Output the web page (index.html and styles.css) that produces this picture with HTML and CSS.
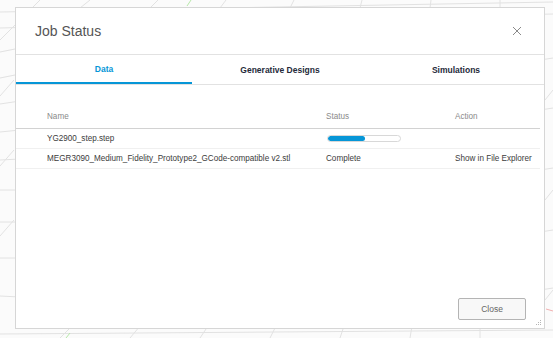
FILE: index.html
```html
<!DOCTYPE html>
<html lang="en">
<head>
    <meta charset="UTF-8">
    <meta name="viewport" content="width=device-width, initial-scale=1.0">
    <title>Job Status</title>
    <link rel="stylesheet" href="styles.css">
</head>

<body>
    <!-- viewport grid behind the dialog -->
    <svg class="grid" width="553" height="338" viewBox="0 0 553 338">
        <g stroke="#e2e2e2" stroke-width="1" fill="none">
            <line x1="0" y1="12" x2="553" y2="2"/>
            <line x1="0" y1="28" x2="553" y2="14"/>
            <line x1="0" y1="52" x2="30" y2="46"/>
            <line x1="0" y1="78" x2="20" y2="74"/>
            <line x1="0" y1="104" x2="20" y2="101"/>
            <line x1="0" y1="132" x2="20" y2="130"/>
            <line x1="0" y1="160" x2="20" y2="159"/>
            <line x1="0" y1="190" x2="20" y2="190"/>
            <line x1="0" y1="222" x2="20" y2="222"/>
            <line x1="0" y1="258" x2="20" y2="258"/>
            <line x1="0" y1="296" x2="20" y2="297"/>
            <line x1="0" y1="334" x2="553" y2="330"/>
            <line x1="540" y1="60" x2="553" y2="58"/>
            <line x1="540" y1="110" x2="553" y2="108"/>
            <line x1="540" y1="170" x2="553" y2="168"/>
            <line x1="540" y1="232" x2="553" y2="230"/>
            <line x1="540" y1="290" x2="553" y2="288"/>
            <line x1="40" y1="0" x2="0" y2="40"/>
            <line x1="14" y1="80" x2="0" y2="96"/>
            <line x1="14" y1="150" x2="0" y2="166"/>
            <line x1="14" y1="220" x2="0" y2="236"/>
            <line x1="60" y1="338" x2="72" y2="326"/>
            <line x1="130" y1="338" x2="140" y2="326"/>
            <line x1="200" y1="338" x2="208" y2="326"/>
            <line x1="270" y1="338" x2="276" y2="326"/>
            <line x1="340" y1="338" x2="344" y2="326"/>
            <line x1="410" y1="338" x2="412" y2="326"/>
            <line x1="480" y1="338" x2="480" y2="326"/>
            <line x1="80" y1="8" x2="90" y2="0"/>
            <line x1="150" y1="8" x2="158" y2="0"/>
            <line x1="220" y1="8" x2="226" y2="0"/>
            <line x1="290" y1="8" x2="294" y2="0"/>
            <line x1="360" y1="8" x2="362" y2="0"/>
            <line x1="430" y1="8" x2="431" y2="0"/>
            <line x1="500" y1="8" x2="500" y2="0"/>
            <line x1="553" y1="90" x2="545" y2="100"/>
            <line x1="553" y1="190" x2="545" y2="200"/>
            <line x1="553" y1="290" x2="545" y2="300"/>
        </g>
        <line x1="187" y1="6" x2="191" y2="0" stroke="#b6e8a8"/>
        <line x1="66" y1="338" x2="70" y2="333" stroke="#b6e8a8"/>
        <line x1="546" y1="309" x2="553" y2="311" stroke="#f1b0b0"/>
    </svg>

    <div class="dialog">
        <div class="dialog-header">
            <span class="dialog-title">Job Status</span>
            <svg class="close-x" width="10" height="10" viewBox="0 0 10 10">
                <path d="M1 1 L9 9 M9 1 L1 9" stroke="#8a8a8a" stroke-width="1" fill="none"/>
            </svg>
        </div>

        <div class="tabs">
            <div class="tab active">Data</div>
            <div class="tab">Generative Designs</div>
            <div class="tab">Simulations</div>
        </div>

        <div class="jobs">
            <div class="row head">
                <span>Name</span>
                <span>Status</span>
                <span>Action</span>
            </div>
            <div class="row">
                <span>YG2900_step.step</span>
                <span><div class="progress"><div class="progress-fill" style="width: 51%;"></div></div></span>
                <span></span>
            </div>
            <div class="row">
                <span>MEGR3090_Medium_Fidelity_Prototype2_GCode-compatible v2.stl</span>
                <span>Complete</span>
                <span>Show in File Explorer</span>
            </div>
        </div>

        <div class="dialog-footer">
            <button class="btn">Close</button>
        </div>

        <svg class="grip" width="6" height="6" viewBox="0 0 6 6">
            <g fill="#b5b5b5">
                <rect x="4" y="0" width="1" height="1"/>
                <rect x="2" y="2" width="1" height="1"/>
                <rect x="4" y="2" width="1" height="1"/>
                <rect x="0" y="4" width="1" height="1"/>
                <rect x="2" y="4" width="1" height="1"/>
                <rect x="4" y="4" width="1" height="1"/>
            </g>
        </svg>
    </div>
</body>
</html>
```

FILE: styles.css
```css
/* General Styles */
body {
    font-family: 'Liberation Sans', Arial, sans-serif;
    margin: 0;
    padding: 7px 0 0 15px;
    width: 553px;
    height: 338px;
    box-sizing: border-box;
    background-color: #fbfbfb;
    overflow: hidden;
    position: relative;
}

.grid {
    position: absolute;
    left: 0;
    top: 0;
}

.dialog {
    position: relative;
    width: 530px;
    height: 322px;
    box-sizing: border-box;
    background-color: #fff;
    border: 1px solid #d6d6d6;
    display: flex;
    flex-direction: column;
}

/* Header */
.dialog-header {
    height: 46px;
    border-bottom: 1px solid #e2e2e2;
    display: flex;
    align-items: center;
    justify-content: space-between;
    padding: 0 22px 0 19px;
}

.dialog-title {
    font-size: 14px;
    color: #555;
}

/* Tabs */
.tabs {
    display: grid;
    grid-template-columns: 176px 1fr 176px;
    height: 29px;
    border-bottom: 1px solid #e2e2e2;
}

.tab {
    display: flex;
    align-items: center;
    justify-content: center;
    font-size: 8.5px;
    font-weight: bold;
    color: #252a3a;
    box-sizing: border-box;
    padding-top: 1px;
}

.tab.active {
    color: #0696d7;
    border-bottom: 2px solid #0696d7;
}

/* Jobs table */
.jobs {
    margin: 20px 4px 0 0;
    font-size: 8.15px;
    color: #3c3c3c;
}

.row {
    display: grid;
    grid-template-columns: 279px 129px 1fr;
    align-items: center;
    height: 19px;
    padding-left: 31px;
    border-bottom: 1px solid #f0f0f0;
}

.row.head {
    height: 23px;
    color: #8a8a8a;
    border-bottom: 1px solid #d2d2d2;
}

.row span {
    white-space: nowrap;
}

.progress {
    width: 72px;
    height: 5px;
    border: 1px solid #d8d8d8;
    border-radius: 4px;
    overflow: hidden;
    margin-left: 1px;
}

.progress-fill {
    height: 100%;
    background-color: #0696d7;
    border-radius: 4px;
}

/* Footer */
.dialog-footer {
    margin-top: auto;
    display: flex;
    justify-content: flex-end;
    padding: 0 18px 8px 0;
}

.btn {
    width: 68px;
    height: 22px;
    font-family: 'Liberation Sans', Arial, sans-serif;
    font-size: 8.5px;
    color: #666;
    background-color: #f8f8f8;
    border: 1px solid #b4b4b4;
    border-radius: 2px;
    cursor: pointer;
}

.grip {
    position: absolute;
    right: 2px;
    bottom: 2px;
}
```
